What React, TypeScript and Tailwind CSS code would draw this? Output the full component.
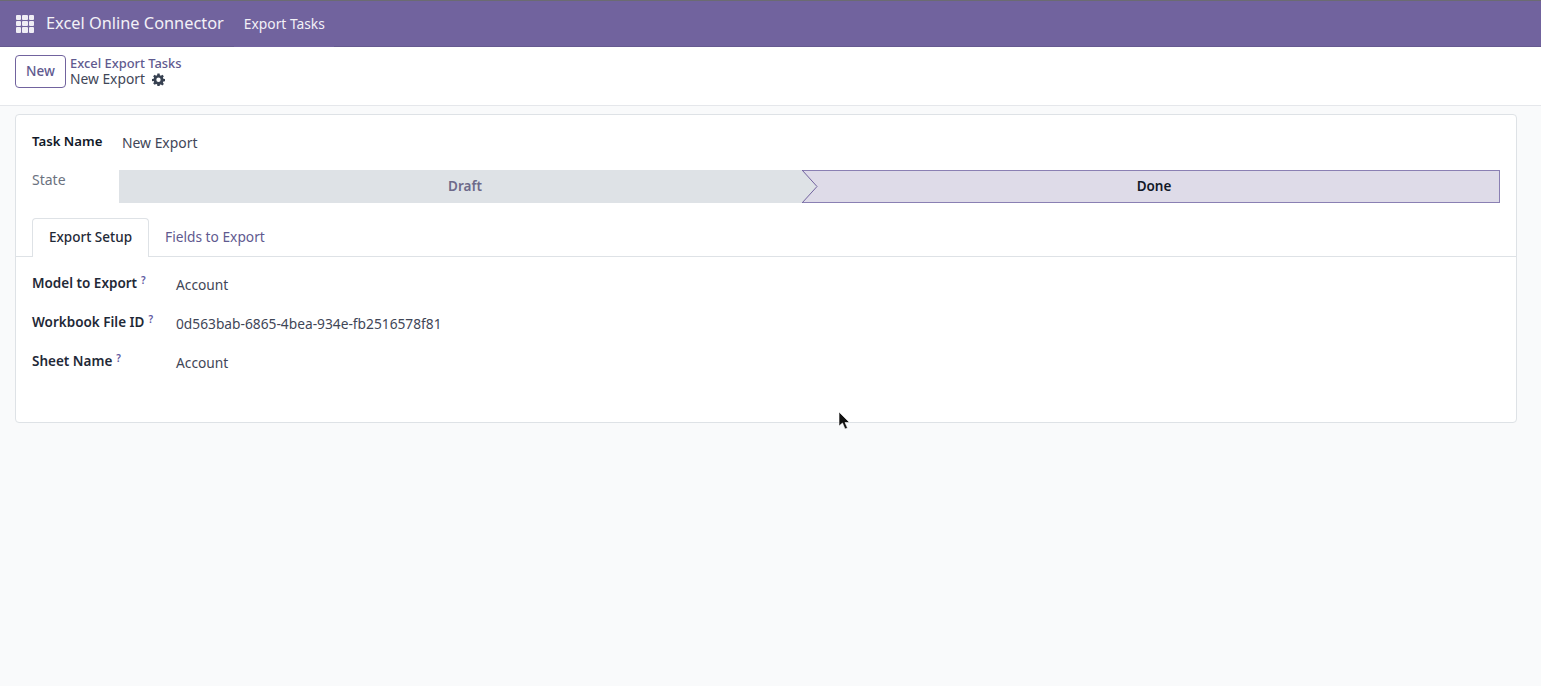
import React from 'react';

const HelpMark = () => (
  <sup className="ml-[4px] text-[10px] font-semibold text-[#5f5aa2] leading-none relative top-[-4px]">?</sup>
);

const GearIcon = () => (
  <svg viewBox="0 0 24 24" className="w-[13px] h-[13px] ml-[7px]" fill="#374151">
    <path
      fillRule="evenodd"
      d="M10 1h4l.6 3.100 1.900.8L19.100 3.100l2.800 2.800-1.800 2.600.8 1.900L24 11v4l-3.100.6-.8 1.900 1.800 2.600-2.800 2.800-2.600-1.800-1.900.8L14 24h-4l-.6-3.100-1.900-.8-2.600 1.800-2.800-2.800 1.800-2.600-.8-1.900L0 15v-4l3.100-.6.8-1.900-1.800-2.600L4.900 3.100l2.600 1.800 1.900-.8L10 1zm2 7.500a4 4 0 1 0 0 8 4 4 0 0 0 0-8z"
    />
  </svg>
);

const AppsIcon = () => (
  <div className="grid grid-cols-3 grid-rows-3 gap-[1px] w-[18px] h-[18px]">
    {Array.from({ length: 9 }).map((_, i) => (
      <span key={i} className="bg-[#efedf5] rounded-[1px]" />
    ))}
  </div>
);

const fields = [
  { label: 'Model to Export', value: 'Account' },
  { label: 'Workbook File ID', value: '0d563bab-6865-4bea-934e-fb2516578f81' },
  { label: 'Sheet Name', value: 'Account' },
];

const App: React.FC = () => {
  return (
    <div className="relative h-[686px] w-full overflow-hidden flex flex-col bg-[#f9fafb] text-[14px] text-[#3f4657] font-['Noto_Sans',sans-serif]">
      {/* Navbar */}
      <div className="h-[47px] shrink-0 flex items-center bg-[#71639e] border-t border-b border-t-[#6b6b72] border-b-[#665a90] text-white">
        <div className="pl-[16px] pr-[12px]">
          <AppsIcon />
        </div>
        <span className="text-[16.350px] text-[#f3f1f7]">Excel Online Connector</span>
        <div className="ml-[10px] h-[46px] mb-[-1px] flex items-center pl-[10px] pr-[9px] bg-[#71639e] text-[13.800px] text-[#f3f1f7]">
          Export Tasks
        </div>
      </div>

      {/* Control panel */}
      <div className="h-[59px] shrink-0 flex items-center bg-white border-b border-[#e5e7eb] pl-[15px] pb-[10px]">
        <button className="w-[51px] h-[33px] border border-[#71639e] rounded-[4px] text-[#5f5a8f] font-medium text-[13.500px]">
          New
        </button>
        <div className="ml-[4px] flex flex-col leading-[16px]">
          <span className="text-[12.900px] font-medium text-[#5f5a8f]">Excel Export Tasks</span>
          <div className="flex items-center">
            <span className="text-[13.800px]">New Export</span>
            <GearIcon />
          </div>
        </div>
      </div>

      {/* Form sheet */}
      <div className="mx-[15px] mt-[8px] mr-[24px] h-[309px] bg-white border border-[#dee2e6] rounded-[4px] flex flex-col">
        <div className="flex items-start pl-[16px] pr-[16px] pt-[15px] h-[41px]">
          <span className="w-[90px] font-semibold text-[#111827] text-[13.200px] leading-[22px]">Task Name</span>
          <span className="leading-[26px] text-[13.900px]">New Export</span>
        </div>

        {/* State bar */}
        <div className="flex items-start pl-[16px] pr-[16px] mt-[14px]">
          <span className="w-[87px] shrink-0 text-[#6b7280] leading-[20px]">State</span>
          <div className="relative flex-1 flex h-[33px] text-[13.500px]">
            <div className="w-[684px] pl-[8px] bg-[#dee2e6] flex items-center justify-center font-semibold text-[#6d6a8a]">
              Draft
            </div>
            <div className="flex-1 pl-[6px] bg-[#dedbe8] border-y border-r border-[#8a80b3] flex items-center justify-center font-semibold text-[#111827]">
              Done
            </div>
            <svg className="absolute left-[683px] top-0 h-[33px] w-[16px]" viewBox="0 0 16 33">
              <path d="M0 0 L15 16.500 L0 33 Z" fill="#dee2e6" />
              <path d="M0 0 L15 16.500 L0 33" fill="none" stroke="#71639e" strokeWidth="1" />
            </svg>
          </div>
        </div>

        {/* Tabs */}
        <div className="mt-[15px] h-[39px] flex items-end border-b border-[#dee2e6] pl-[16px] shrink-0">
          <div className="h-[39px] pb-[1px] w-[117px] bg-white border border-b-0 border-[#dee2e6] rounded-t-[4px] flex items-center justify-center font-medium text-[#1f2937] text-[13.500px] mb-[-1px]">
            Export Setup
          </div>
          <div className="h-[38px] flex items-center px-[16px] text-[#5f5a8f] text-[13.750px]">Fields to Export</div>
        </div>

        {/* Fields */}
        <div className="pl-[16px] pt-[13px] flex flex-col gap-[13px]">
          {fields.map((f) => (
            <div key={f.label} className="flex items-start h-[26px]">
              <span className="w-[144px] shrink-0 pt-[1px] font-semibold text-[#1f2937] text-[13.500px] leading-[24px]">
                {f.label}
                <HelpMark />
              </span>
              <span className="leading-[30px] text-[13.750px]">{f.value}</span>
            </div>
          ))}
        </div>
      </div>

      {/* Mouse pointer from the recording */}
      <svg className="absolute left-[838px] top-[411px] w-[13px] h-[20px]" viewBox="0 0 13 20">
        <path d="M1 1 L1 15 L4.500 12 L7 18 L9.500 17 L7 11.500 L11.500 11.500 Z" fill="#111" stroke="#fff" strokeWidth="0.6" />
      </svg>
    </div>
  );
};

export default App;
